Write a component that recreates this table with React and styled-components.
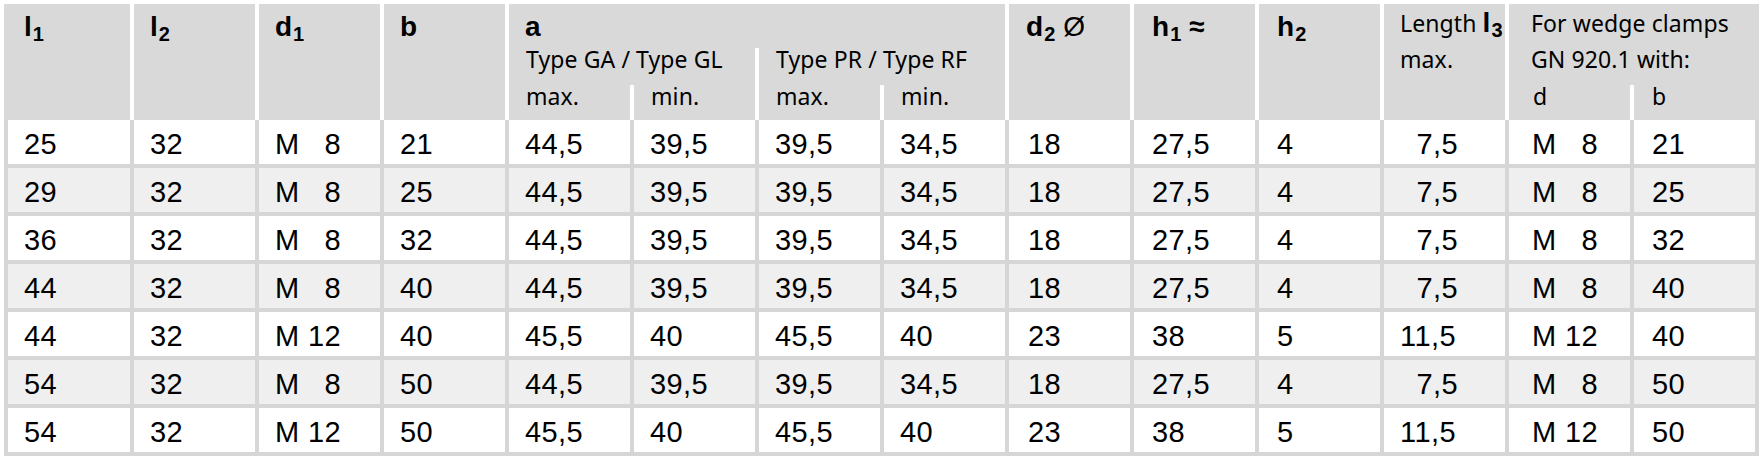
import React from "react";
import styled, { createGlobalStyle } from "styled-components";

const Global = createGlobalStyle`
  html, body { margin: 0; padding: 0; background: #ffffff; }
  body { font-family: "Liberation Sans", Arial, sans-serif; color: #000; }
`;

const GRID = "#d6d6d6";
const HEAD = "#d9d9d9";
const NARROW = `"Noto Sans Condensed", "Noto Sans", sans-serif`;

const Table = styled.table`
  margin: 4px 0 0 4px;
  border-collapse: separate;
  border-spacing: 0;
  table-layout: fixed;
  width: 1755px;
`;

const HeadRow = styled.tr`
  height: ${(p) => p.$h}px;
`;

const Th = styled.th`
  background: ${HEAD};
  border-right: ${(p) => (p.$last ? "none" : "4px solid #ffffff")};
  text-align: left;
  vertical-align: top;
  font-weight: normal;
  white-space: nowrap;
  padding: 0 2px 0 ${(p) => p.$pl ?? 16}px;
`;

const BoldHead = styled(Th)`
  padding-top: 7px;
  font-size: 28px;
  line-height: 32px;
  font-weight: bold;
`;

const SubHead = styled(Th)`
  font-family: ${NARROW};
  font-stretch: condensed;
  font-size: 23px;
  line-height: 22px;
  letter-spacing: 0.1px;
  padding-left: ${(p) => p.$pl ?? 17}px;
`;

const NoteHead = styled(Th)`
  font-family: ${NARROW};
  font-stretch: condensed;
  font-size: 23px;
  line-height: 36px;
  letter-spacing: 0.1px;
  padding-top: 1px;
`;

const Strong = styled.span`
  font-family: "Liberation Sans", Arial, sans-serif;
  font-stretch: normal;
  font-weight: bold;
  font-size: 28px;
  line-height: 1;
  letter-spacing: 0;
`;

const Plain = styled.span`
  font-weight: normal;
  margin-left: 8px;
`;

const Sub = styled.sub`
  font-size: 20px;
  line-height: 0;
  vertical-align: -5px;
  margin-left: 1px;
`;

const BodyRow = styled.tr`
  height: 48px;
  background: ${(p) => (p.$alt ? "#efefef" : "#ffffff")};
`;

const Td = styled.td`
  border-right: 4px solid ${GRID};
  border-bottom: 4px solid ${GRID};
  &:first-child {
    border-left: 4px solid ${GRID};
  }
  padding: 3px 4px 0 ${(p) => p.$pl ?? 16}px;
  font-size: 29px;
  line-height: 32px;
  letter-spacing: 0.4px;
  vertical-align: middle;
  white-space: nowrap;
  overflow: hidden;
`;

const FS = "\u2007";
const M8 = `M\u00a0${FS}8`;
const M12 = "M\u00a012";

const rows = [
  ["25", "32", M8, "21", "44,5", "39,5", "39,5", "34,5", "18", "27,5", "4", `${FS}7,5`, M8, "21"],
  ["29", "32", M8, "25", "44,5", "39,5", "39,5", "34,5", "18", "27,5", "4", `${FS}7,5`, M8, "25"],
  ["36", "32", M8, "32", "44,5", "39,5", "39,5", "34,5", "18", "27,5", "4", `${FS}7,5`, M8, "32"],
  ["44", "32", M8, "40", "44,5", "39,5", "39,5", "34,5", "18", "27,5", "4", `${FS}7,5`, M8, "40"],
  ["44", "32", M12, "40", "45,5", "40", "45,5", "40", "23", "38", "5", "11,5", M12, "40"],
  ["54", "32", M8, "50", "44,5", "39,5", "39,5", "34,5", "18", "27,5", "4", `${FS}7,5`, M8, "50"],
  ["54", "32", M12, "50", "45,5", "40", "45,5", "40", "23", "38", "5", "11,5", M12, "50"],
];

/* left padding per body column */
const pads = [16, 16, 16, 16, 16, 16, 16, 16, 19, 18, 18, 16, 23, 18];

const widths = [130, ...Array(13).fill(125)];

export default function App() {
  return (
    <>
      <Global />
      <Table>
        <colgroup>
          {widths.map((w, i) => (
            <col key={i} style={{ width: w }} />
          ))}
        </colgroup>
        <thead>
          <HeadRow $h={44}>
            <BoldHead rowSpan={3} $pl={20}>
              l<Sub>1</Sub>
            </BoldHead>
            <BoldHead rowSpan={3}>
              l<Sub>2</Sub>
            </BoldHead>
            <BoldHead rowSpan={3}>
              d<Sub>1</Sub>
            </BoldHead>
            <BoldHead rowSpan={3}>b</BoldHead>
            <BoldHead colSpan={4}>a</BoldHead>
            <BoldHead rowSpan={3} $pl={17}>
              d<Sub>2</Sub>
              <Plain>Ø</Plain>
            </BoldHead>
            <BoldHead rowSpan={3} $pl={18}>
              h<Sub>1</Sub> ≈
            </BoldHead>
            <BoldHead rowSpan={3} $pl={18}>
              h<Sub>2</Sub>
            </BoldHead>
            <NoteHead rowSpan={3} $pl={16}>
              Length <Strong>l<Sub>3</Sub></Strong>
              <br />
              max.
            </NoteHead>
            <NoteHead colSpan={2} rowSpan={2} $last $pl={22}>
              For wedge clamps
              <br />
              GN 920.1 with:
            </NoteHead>
          </HeadRow>
          <HeadRow $h={37}>
            <SubHead colSpan={2}>Type GA / Type GL</SubHead>
            <SubHead colSpan={2}>Type PR / Type RF</SubHead>
          </HeadRow>
          <HeadRow $h={35}>
            <SubHead>max.</SubHead>
            <SubHead>min.</SubHead>
            <SubHead>max.</SubHead>
            <SubHead>min.</SubHead>
            <SubHead $pl={24}>d</SubHead>
            <SubHead $last $pl={18}>b</SubHead>
          </HeadRow>
        </thead>
        <tbody>
          {rows.map((r, i) => (
            <BodyRow key={i} $alt={i % 2 === 1}>
              {r.map((c, j) => (
                <Td key={j} $pl={pads[j]}>
                  {c}
                </Td>
              ))}
            </BodyRow>
          ))}
        </tbody>
      </Table>
    </>
  );
}
